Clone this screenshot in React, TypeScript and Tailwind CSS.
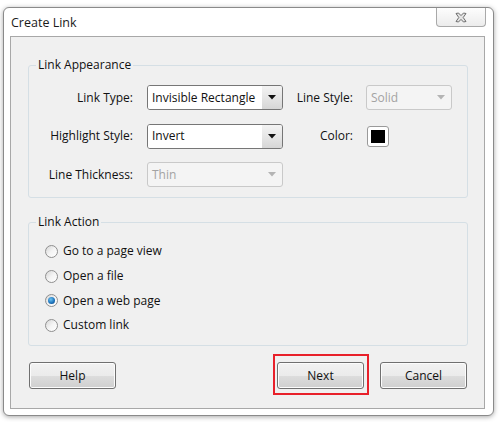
import React from "react";

const font = { fontFamily: '"Open Sans", "Noto Sans", sans-serif' };

function Arrow({ disabled }: { disabled?: boolean }) {
  return (
    <svg width="8" height="5" viewBox="0 0 8 5" className="block">
      <path d="M0 0 L8 0 L4 4.5 Z" fill={disabled ? "#b4b4b4" : "#111111"} />
    </svg>
  );
}

function Select({ value, width, disabled }: { value: string; width: string; disabled?: boolean }) {
  if (disabled) {
    return (
      <div className={`${width} h-[25px] flex items-stretch rounded-[3px] border border-[#c9c9c9] bg-[#f4f4f4]`}>
        <div className="flex-1 flex items-center pl-[4px] text-[#a3a3a3]">{value}</div>
        <div className="w-[20px] flex items-center justify-center">
          <Arrow disabled />
        </div>
      </div>
    );
  }
  return (
    <div className={`${width} h-[25px] flex items-stretch rounded-[3px] border border-[#767676] bg-white overflow-hidden shadow-[inset_0_0_0_1px_#e9e9e9]`}>
      <div className="flex-1 flex items-center pl-[4px] bg-white text-[#111]">{value}</div>
      <div className="w-[20px] flex items-center justify-center bg-gradient-to-b from-[#f3f3f3] via-[#e6e6e6] to-[#d6d6d6]">
        <Arrow />
      </div>
    </div>
  );
}

function Radio({ label, checked }: { label: string; checked?: boolean }) {
  return (
    <div className="h-[24.7px] flex items-center">
      <div className="ml-[16px] w-[13px] h-[13px] rounded-full border border-[#8f8f8f] bg-gradient-to-br from-[#d6d6d6] via-[#f4f4f4] to-[#ffffff] flex items-center justify-center">
        {checked && (
          <div className="w-[7px] h-[7px] rounded-full bg-[radial-gradient(circle_at_40%_35%,#6cc3f2,#1a6fb8_60%,#0d3f78)]" />
        )}
      </div>
      <span className="ml-[5px] text-[#111]">{label}</span>
    </div>
  );
}

function Button({ label, children }: { label: string; children?: React.ReactNode }) {
  return (
    <div className="relative w-[87px] h-[27px]">
      <div className="w-full h-full rounded-[3px] border border-[#707070] bg-[linear-gradient(#f2f2f2_0%,#ebebeb_50%,#dddddd_51%,#cfcfcf_100%)] shadow-[inset_0_0_0_1px_#fcfcfc] flex items-center justify-center text-[#111]">
        {label}
      </div>
      {children}
    </div>
  );
}

function Group({ title, className, children }: { title: string; className?: string; children: React.ReactNode }) {
  return (
    <div className={`relative ml-[17px] w-[440px] rounded-[3px] border border-[#d5dfe5] ${className ?? ""}`}>
      <span className="absolute left-[7px] -top-[10px] px-[2px] bg-[#f0f0f0] text-[#111] leading-[18px]">{title}</span>
      {children}
    </div>
  );
}

export default function App() {
  return (
    <div className="w-[500px] h-[422px] bg-white pt-[7px] pl-[3px] text-[12px]" style={font}>
      <div className="w-[491px] h-[409px] rounded-[6px] border border-[#8a8a8a] bg-white shadow-[0_1px_5px_rgba(0,0,0,0.35)] flex flex-col">
        <div className="h-[28px] flex items-start relative">
          <span className="ml-[7px] mt-[6px] text-[12.5px] text-[#1a1a1a]">Create Link</span>
          <div className="ml-auto mr-[7px] w-[50px] h-[19px] rounded-b-[4px] border border-t-0 border-[#a9a9a9] bg-gradient-to-b from-[#fdfdfd] to-[#ececec] flex items-center justify-center">
            <svg width="12" height="11" viewBox="0 0 12 11">
              <path
                d="M1 1.5 L3.5 1 L6 3.6 L8.5 1 L11 1.5 L8.2 5.5 L11 9.5 L8.5 10 L6 7.4 L3.5 10 L1 9.5 L3.8 5.5 Z"
                fill="#e4e4e4"
                stroke="#6d6d6d"
                strokeWidth="1"
                strokeLinejoin="round"
              />
            </svg>
          </div>
        </div>
        <div className="ml-[6px] w-[475px] h-[373px] border border-[#a8a8a8] bg-[#f0f0f0] flex flex-col">
          <Group title="Link Appearance" className="mt-[28px] h-[133px] pt-[19px]">
            <div className="flex items-center h-[25px]">
              <span className="w-[104px] text-right text-[#111]">Link Type:</span>
              <div className="ml-[14px]"><Select value="Invisible Rectangle" width="w-[136px]" /></div>
              <span className="w-[70px] text-right text-[#111]">Line Style:</span>
              <div className="ml-[13px]"><Select value="Solid" width="w-[86px]" disabled /></div>
            </div>
            <div className="flex items-center h-[26px] mt-[13px]">
              <span className="w-[104px] text-right text-[#111]">Highlight Style:</span>
              <div className="ml-[14px]"><Select value="Invert" width="w-[136px]" /></div>
              <span className="w-[70px] text-right text-[#111]">Color:</span>
              <div className="ml-[14px] w-[22px] h-[21px] rounded-[3px] border border-[#9a9a9a] bg-white flex items-center justify-center">
                <div className="w-[14px] h-[13px] bg-black" />
              </div>
            </div>
            <div className="flex items-center h-[25px] mt-[13px]">
              <span className="w-[104px] text-right text-[#111]">Line Thickness:</span>
              <div className="ml-[14px]"><Select value="Thin" width="w-[136px]" disabled /></div>
            </div>
          </Group>
          <Group title="Link Action" className="mt-[24px] h-[124px] pt-[16px]">
            <Radio label="Go to a page view" />
            <Radio label="Open a file" />
            <Radio label="Open a web page" checked />
            <Radio label="Custom link" />
          </Group>
          <div className="flex items-center mt-[16px] ml-[18px]">
            <Button label="Help" />
            <div className="ml-auto" />
            <Button label="Next">
              <div className="absolute -left-[4px] -top-[8px] -right-[5px] -bottom-[6px] border-2 border-[#e8202a] pointer-events-none" />
            </Button>
            <div className="ml-[16px] mr-[17px]">
              <Button label="Cancel" />
            </div>
          </div>
        </div>
      </div>
    </div>
  );
}
